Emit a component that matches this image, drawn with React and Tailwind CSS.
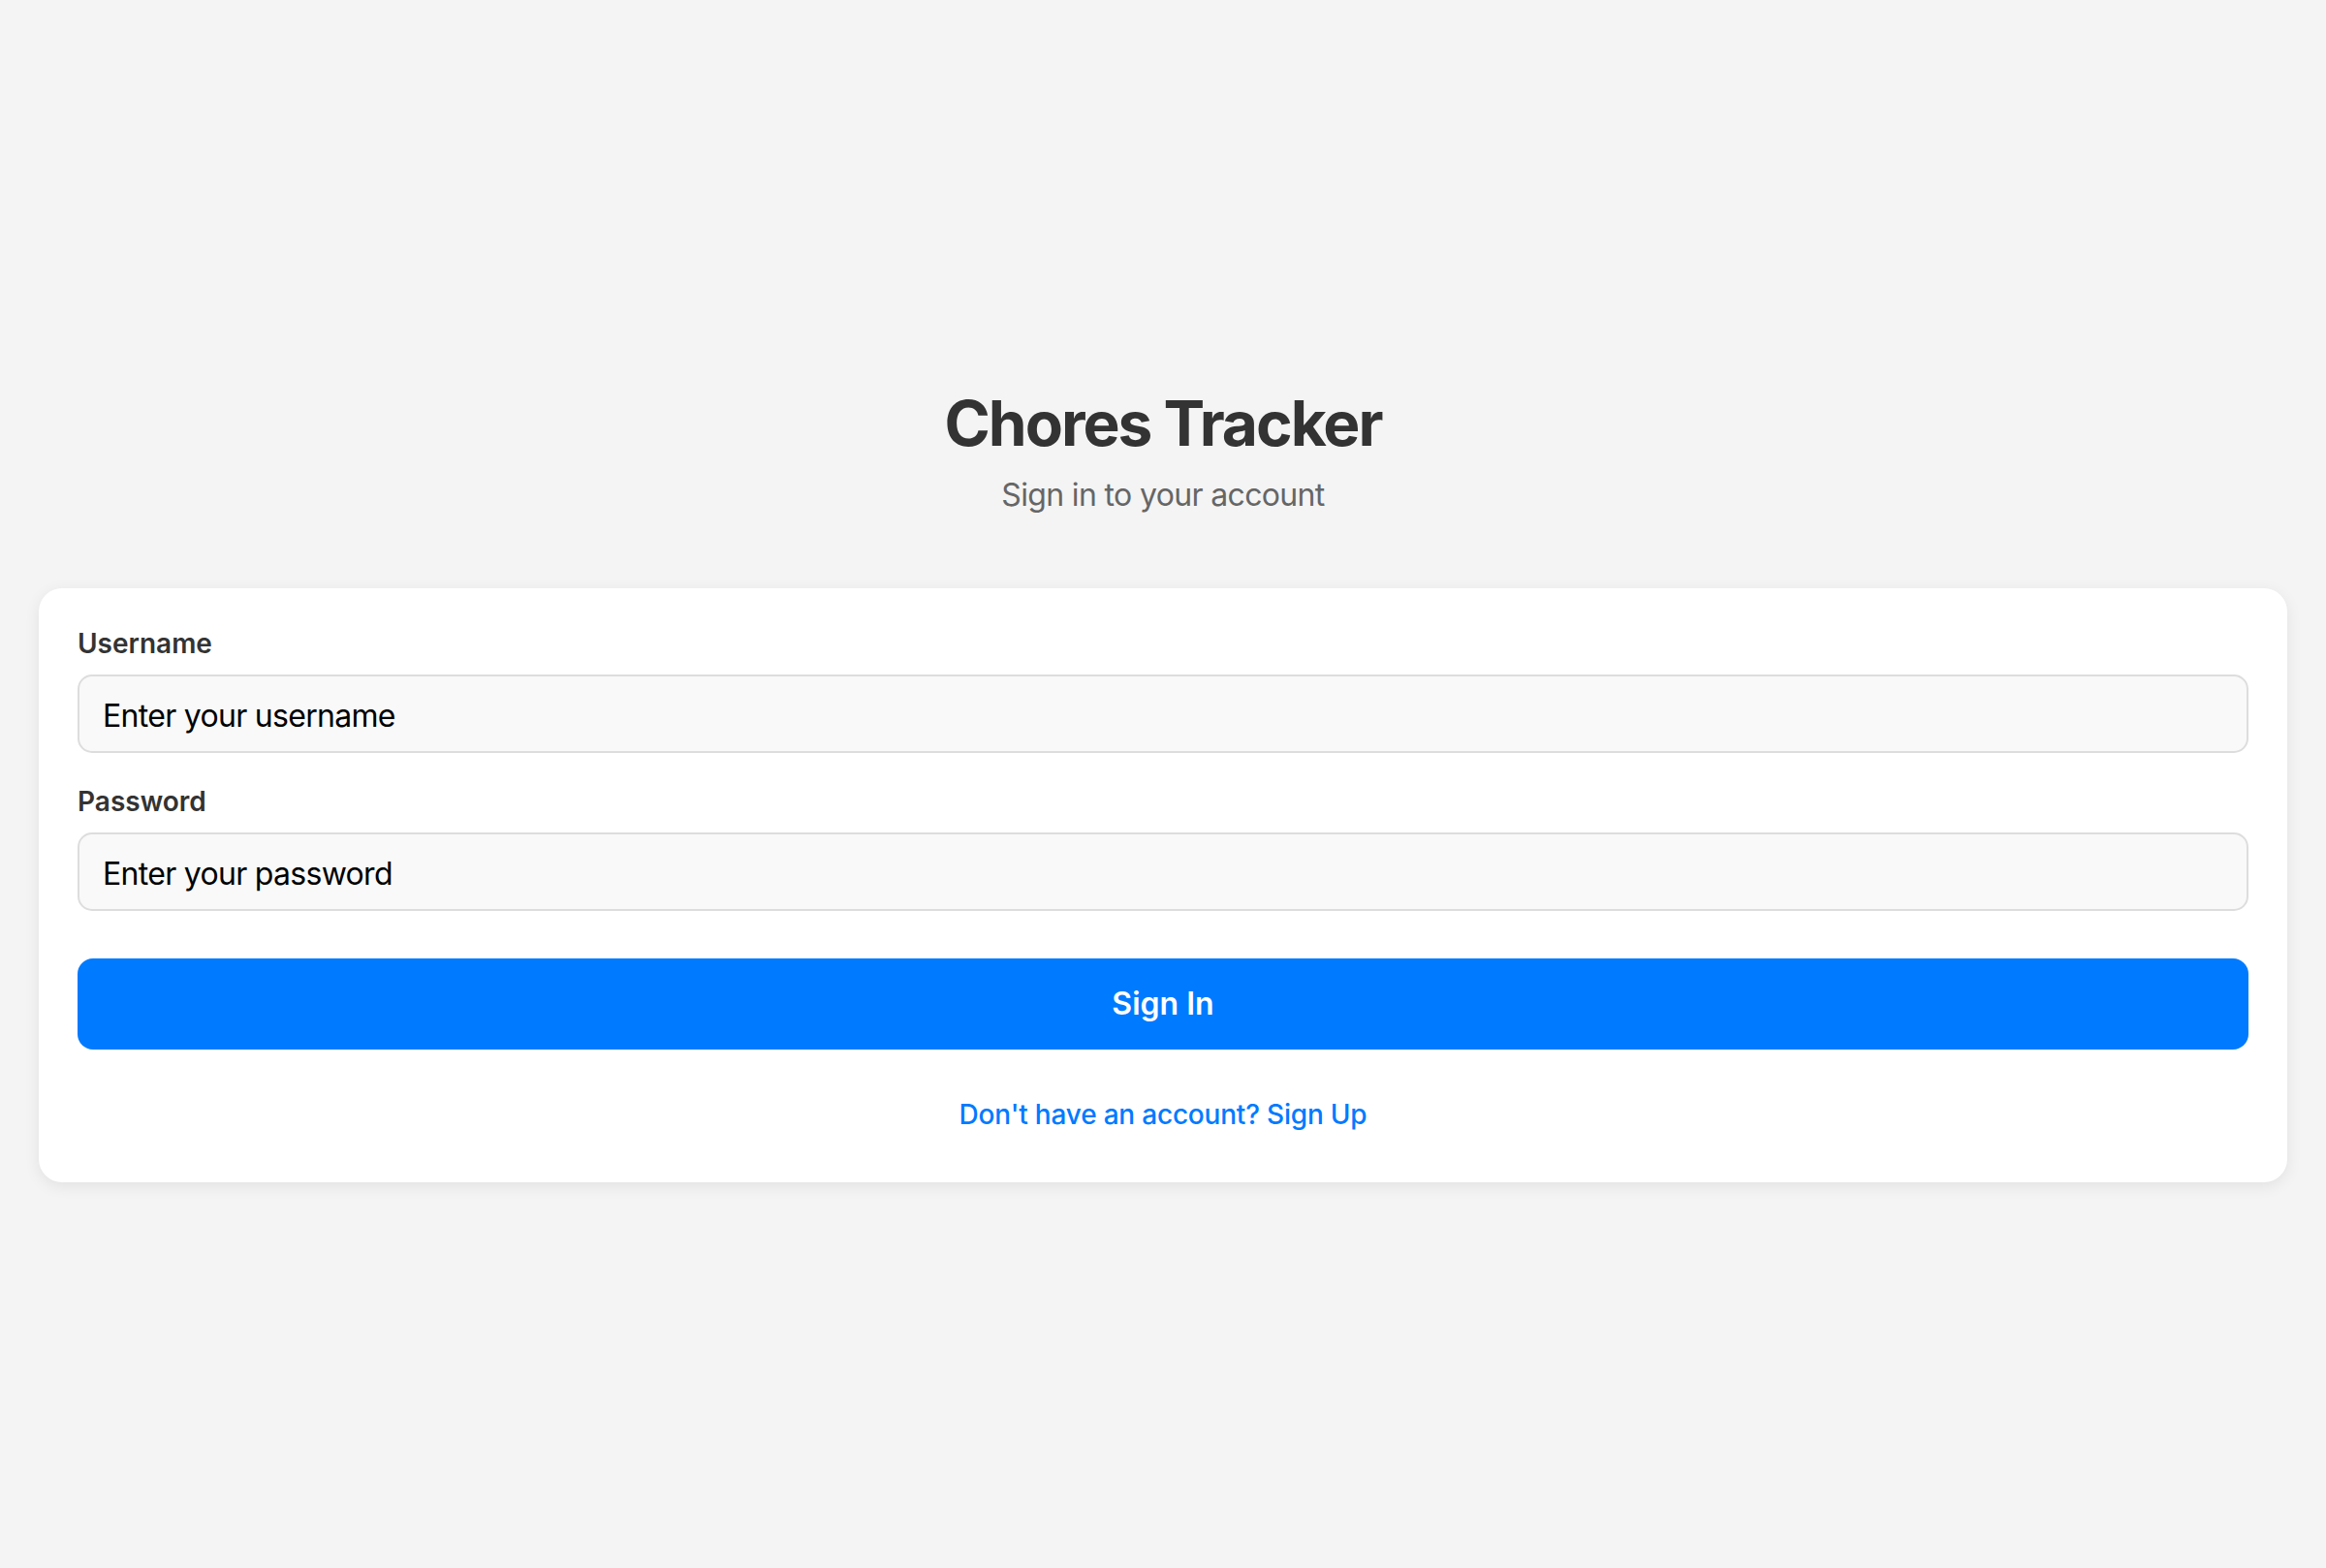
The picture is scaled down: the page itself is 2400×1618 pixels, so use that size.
import { useState } from 'react';

function Field({ label, type = 'text', placeholder, value, onChange }) {
  return (
    <div>
      <label className="block text-[28px] leading-[34px] font-semibold text-[#333] mb-[15px]">
        {label}
      </label>
      <input
        type={type}
        value={value}
        onChange={(e) => onChange(e.target.value)}
        placeholder={placeholder}
        className="block w-full h-[81px] px-6 pt-[3px] text-[32px] tracking-[-0.7px] text-black bg-[#f9f9f9] border-2 border-[#ddd] rounded-[15px] outline-none placeholder:text-black"
      />
    </div>
  );
}

export default function App() {
  const [username, setUsername] = useState('');
  const [password, setPassword] = useState('');

  return (
    <div
      className="min-h-screen w-full flex flex-col justify-center px-10 bg-[#f4f4f4]"
      style={{ fontFamily: 'Inter, "Noto Sans", sans-serif' }}
    >
      {/* Header */}
      <div className="text-center">
        <h1 className="text-[64px] leading-[77px] font-bold text-[#333] tracking-[-2px] mb-[17px]">
          Chores Tracker
        </h1>
        <p className="text-[32px] leading-[38px] tracking-[-0.65px] text-[#666]">Sign in to your account</p>
      </div>

      {/* Login card */}
      <div className="mt-[77px] bg-white rounded-[24px] px-10 pt-10 pb-[53px] shadow-[0_4px_16px_rgba(0,0,0,0.08)]">
        <Field
          label="Username"
          placeholder="Enter your username"
          value={username}
          onChange={setUsername}
        />
        <div className="mt-[33px]">
          <Field
            label="Password"
            type="password"
            placeholder="Enter your password"
            value={password}
            onChange={setPassword}
          />
        </div>
        <button className="mt-[49px] w-full h-[94px] rounded-[16px] bg-[#007aff] text-white text-[32px] font-semibold">
          Sign In
        </button>
        <div className="mt-[50px] text-center text-[28px] leading-[34px] tracking-[-0.2px] font-medium text-[#007aff]">
          <a href="#">Don't have an account? Sign Up</a>
        </div>
      </div>
    </div>
  );
}
